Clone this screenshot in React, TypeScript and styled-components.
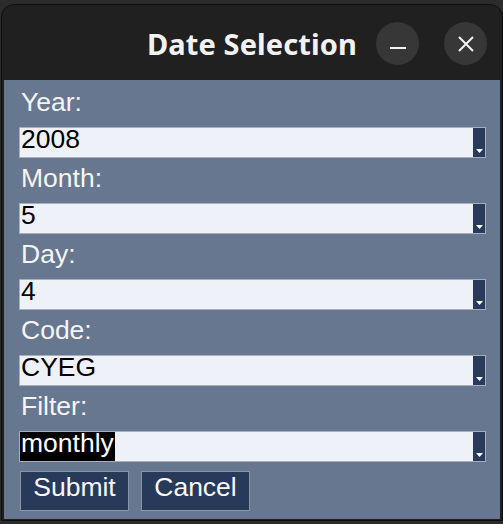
import React from 'react';
import styled, { createGlobalStyle } from 'styled-components';

const GlobalStyle = createGlobalStyle`
  html, body {
    margin: 0;
    padding: 0;
    background: #2b2b2b;
    width: 503px;
    height: 524px;
    overflow: hidden;
  }
`;

const fields = [
  { label: 'Year:', value: '2008' },
  { label: 'Month:', value: '5' },
  { label: 'Day:', value: '4' },
  { label: 'Code:', value: 'CYEG' },
  { label: 'Filter:', value: 'monthly', selected: true },
];

const App: React.FC = () => {
  return (
    <>
      <GlobalStyle />
      <Window>
        <TitleBar>
          <span />
          <Title>Date Selection</Title>
          <Controls>
            <RoundButton aria-label="minimize">
              <svg width="18" height="18" viewBox="0 0 18 18">
                <rect x="1" y="12" width="16" height="2" fill="#f2f2f2" />
              </svg>
            </RoundButton>
            <RoundButton aria-label="close">
              <svg width="18" height="18" viewBox="0 0 18 18">
                <path
                  d="M2 2 L16 16 M16 2 L2 16"
                  stroke="#f2f2f2"
                  strokeWidth="2"
                />
              </svg>
            </RoundButton>
          </Controls>
        </TitleBar>
        <Body>
          {fields.map((f) => (
            <Group key={f.label}>
              <Label>{f.label}</Label>
              <Combo>
                <Value>
                  <ValueText $selected={!!f.selected}>{f.value}</ValueText>
                </Value>
                <DropButton>
                  <svg width="7" height="4" viewBox="0 0 7 4">
                    <path d="M0 0 H7 L3.5 4 Z" fill="#ffffff" />
                  </svg>
                </DropButton>
              </Combo>
            </Group>
          ))}
          <ButtonRow>
            <ActionButton>Submit</ActionButton>
            <ActionButton>Cancel</ActionButton>
          </ButtonRow>
        </Body>
      </Window>
    </>
  );
};

export default App;

const Window = styled.div`
  box-sizing: border-box;
  margin: 4px 0 0 1px;
  width: 502px;
  background: #202020;
  border: 1px solid #0e0e0e;
  border-radius: 13px 13px 0 0;
  padding: 0 2px 1px 2px;
`;

const TitleBar = styled.div`
  height: 75px;
  display: grid;
  grid-template-columns: 1fr auto 1fr;
  align-items: center;
  margin: 0 -2px;
`;

const Title = styled.div`
  font-family: 'Noto Sans', 'DejaVu Sans', sans-serif;
  font-weight: 700;
  font-size: 29px;
  color: #f2f2f2;
  letter-spacing: 0.1px;
  padding-top: 2px;
`;

const Controls = styled.div`
  display: flex;
  justify-content: flex-end;
  gap: 25px;
  padding-right: 15px;
  padding-top: 1px;
`;

const RoundButton = styled.div`
  width: 43px;
  height: 43px;
  border-radius: 50%;
  background: #373737;
  display: flex;
  align-items: center;
  justify-content: center;
  svg {
    margin-top: 1px;
  }
`;

const Body = styled.div`
  background: #67778f;
  height: 439px;
  box-sizing: border-box;
  padding: 2px 14px 8px 15px;
  font-family: 'Liberation Sans', Arial, sans-serif;
  font-size: 26.5px;
`;

const Group = styled.div`
  display: flex;
  flex-direction: column;
`;

const Label = styled.div`
  height: 45px;
  line-height: 40px;
  color: #f5f5f5;
  padding-left: 2px;
`;

const Combo = styled.div`
  box-sizing: border-box;
  height: 31px;
  width: 467px;
  display: flex;
  background: #eef2f8;
  border: 1px solid #a8afb9;
`;

const Value = styled.div`
  flex: 1;
  line-height: 22px;
  color: #000;
`;

const ValueText = styled.span<{ $selected: boolean }>`
  display: inline-block;
  height: 29px;
  padding-right: ${(p) => (p.$selected ? '1px' : '0')};
  background: ${(p) => (p.$selected ? '#000' : 'transparent')};
  color: ${(p) => (p.$selected ? '#fff' : '#000')};
  vertical-align: top;
  padding-left: 1px;
`;

const DropButton = styled.div`
  width: 12px;
  background: #283b5c;
  display: flex;
  align-items: flex-end;
  justify-content: center;
  padding-bottom: 4px;
  box-sizing: border-box;
`;

const ButtonRow = styled.div`
  display: flex;
  gap: 12px;
  margin-top: 9px;
  padding-left: 1px;
`;

const ActionButton = styled.div`
  box-sizing: border-box;
  width: 109px;
  height: 40px;
  background: #283a5a;
  border: 1px solid #8b96a5;
  color: #f8f8f8;
  text-align: center;
  line-height: 30px;
`;
